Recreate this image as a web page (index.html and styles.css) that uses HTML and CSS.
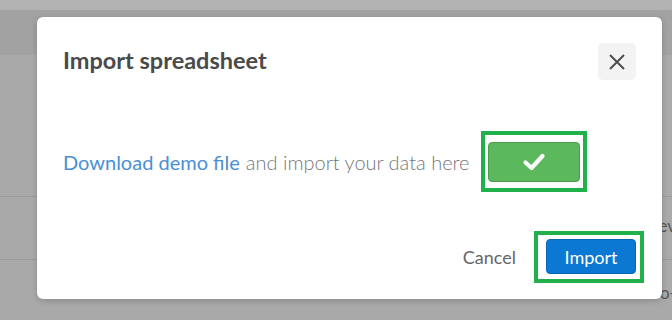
FILE: index.html
```html
<!DOCTYPE html>
<html lang="en">
<head>
    <meta charset="UTF-8">
    <title>Import spreadsheet</title>
    <link rel="stylesheet" href="styles.css">
</head>
<body>
<div id="page">
    <div class="topbar"></div>
    <div class="head"></div>
    <div class="row r1"></div>
    <div class="row r2"><span>ev</span></div>
    <div class="row r3"><span>o-</span></div>
</div>
<div id="modal">
    <div class="m-head">
        <h2>Import spreadsheet</h2>
        <button class="close" type="button">
            <svg width="18" height="18" viewBox="0 0 18 18"><path d="M2 2L16 16M16 2L2 16" stroke="#4d4d4d" stroke-width="2" fill="none"/></svg>
        </button>
    </div>
    <div class="m-body">
        <a href="#">Download demo file</a><span class="txt">and import your data here</span>
        <div class="mark">
            <button class="btn-ok" type="button">
                <svg width="24" height="20" viewBox="0 0 24 20"><path d="M3.5 10.5L9.5 16L20.5 4" stroke="#fff" stroke-width="4.2" fill="none" stroke-linecap="round" stroke-linejoin="round"/></svg>
            </button>
        </div>
    </div>
    <div class="m-foot">
        <span class="cancel">Cancel</span>
        <div class="mark mark2">
            <button class="btn-import" type="button">Import</button>
        </div>
    </div>
</div>
</body>
</html>
```

FILE: styles.css
```css
html,body{margin:0;padding:0;overflow:hidden;}
body{width:672px;height:320px;background:#a9a9a9;font-family:Lato,"Noto Sans",sans-serif;position:relative;}
#page .topbar{height:10px;background:#b3b3b3;}
#page .head{height:45px;background:#a2a2a2;}
#page .row{border-bottom:1px solid #9a9a9a;position:relative;}
#page .r1{height:141px;}
#page .r2{height:62px;}
#page .r3{height:60px;border-bottom:none;}
#page .row span{position:absolute;right:-4px;font-size:17px;color:#555;}
#page .r2 span{top:18px;}
#page .r3 span{top:22px;}

#modal{position:absolute;left:37px;top:17px;width:625px;height:282px;background:#fff;border-radius:6px;box-shadow:0 2px 6px rgba(0,0,0,.18);box-sizing:border-box;padding:0 26px 0 26px;}
.m-head{display:flex;align-items:center;justify-content:space-between;padding-top:26px;}
.m-head h2{margin:0 0 3px 0;font-size:23.5px;font-weight:700;color:#4a4a4a;}
.close{width:38px;height:37px;border:none;border-radius:5px;background:#f3f3f3;display:flex;align-items:center;justify-content:center;padding:0;}
.m-body{display:flex;align-items:center;margin-top:51px;font-size:20px;}
.m-body a{color:#4a8fd6;text-decoration:none;margin-right:6px;}
.m-body .txt{color:#777;font-weight:300;}
.mark{border:4px solid #20b14a;padding:7px 3px 6px 3px;margin-left:11px;}
.btn-ok{display:flex;align-items:center;justify-content:center;width:92px;height:40px;background:#5cb85c;border:1px solid #4a9e4a;border-radius:4px;padding:0;}
.m-foot{display:flex;align-items:center;justify-content:flex-end;margin-top:39px;margin-right:-8px;}
.cancel{font-size:18px;color:#666;margin-right:18px;}
.mark2{margin-left:0;padding:4px 4px 5px 8px;}
.btn-import{width:90px;height:35px;background:#0b79d3;border:1px solid #0a66b4;border-radius:4px;color:#fff;font-family:Lato,"Noto Sans",sans-serif;font-size:18px;padding:0;}
```
